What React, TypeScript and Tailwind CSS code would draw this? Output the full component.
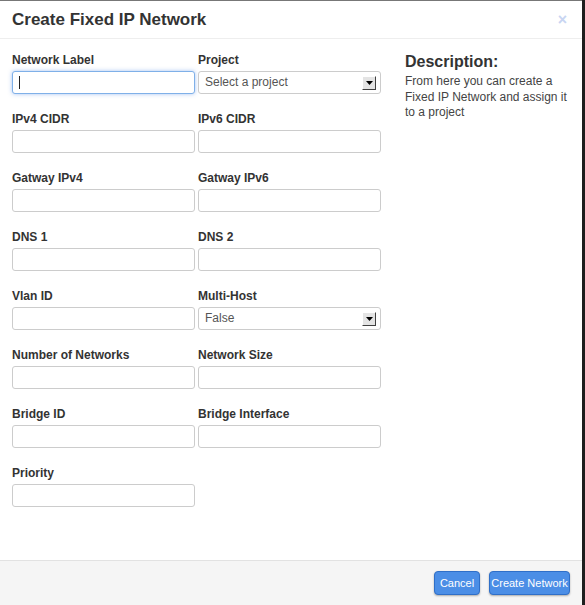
import React from "react";

const Arrow: React.FC = () => (
  <span className="absolute right-[4px] top-[4px] w-[14px] h-[14px] bg-[#e4e4e4] border border-t-white border-l-white border-r-[#404040] border-b-[#404040] flex items-center justify-center">
    <svg width="7" height="4" viewBox="0 0 7 4">
      <path d="M0 0h7L3.5 4z" fill="#000" />
    </svg>
  </span>
);

const Field: React.FC<{ label: string; value?: string; select?: boolean; focus?: boolean }> = ({
  label,
  value,
  select,
  focus,
}) => (
  <div className="w-[183px]">
    <div className="h-[14px] leading-[14px] text-[12px] font-bold text-[#333] mb-[4px]">{label}</div>
    <div
      className={
        "relative h-[23px] rounded-[3px] border bg-white text-[12px] text-[#555] leading-[21px] px-[6px] " +
        (focus
          ? "border-[#7fb0e8] shadow-[0_0_4px_rgba(82,140,230,0.5)]"
          : "border-[#cccccc]")
      }
    >
      {focus && <span className="inline-block w-px h-[13px] bg-[#222] align-middle" />}
      {value}
      {select && <Arrow />}
    </div>
  </div>
);

const rows: [string, string | null, string?, boolean?][] = [
  ["Network Label", "Project", "Select a project", true],
  ["IPv4 CIDR", "IPv6 CIDR"],
  ["Gatway IPv4", "Gatway IPv6"],
  ["DNS 1", "DNS 2"],
  ["Vlan ID", "Multi-Host", "False", true],
  ["Number of Networks", "Network Size"],
  ["Bridge ID", "Bridge Interface"],
  ["Priority", null],
];

const App: React.FC = () => {
  return (
    <div
      className="w-[585px] h-[605px] flex bg-white"
      style={{ fontFamily: '"Liberation Sans", Arial, sans-serif' }}
    >
      <div className="w-[582px] h-full flex flex-col border-t border-[#777]">
        {/* Header */}
        <div className="h-[38px] border-b border-[#eeeeee] flex items-center justify-between pl-[12px] pr-[15px]">
          <h1 className="text-[17px] font-bold text-[#333]">Create Fixed IP Network</h1>
          <span className="text-[16px] font-bold text-[#c8d5f2] leading-none">×</span>
        </div>

        {/* Body */}
        <div className="flex-1 flex pl-[12px] pt-[14px]">
          <div className="flex flex-col gap-[18px]">
            {rows.map(([a, b, v, sel], i) => (
              <div key={i} className="flex gap-[3px]">
                <Field label={a} focus={i === 0} />
                {b && <Field label={b} value={v} select={sel} />}
              </div>
            ))}
          </div>
          <div className="ml-[24px] w-[175px]">
            <h2 className="text-[16px] font-bold text-[#333] leading-[18px]">Description:</h2>
            <p className="mt-[3px] text-[12px] leading-[15.5px] text-[#444]">
              From here you can create a Fixed IP Network and assign it to a project
            </p>
          </div>
        </div>

        {/* Footer */}
        <div className="h-[45px] border-t border-[#e2e2e2] bg-[#f5f5f5] flex items-center justify-end gap-[9px] pr-[12px]">
          <button className="h-[24px] w-[46px] rounded-[4px] bg-[#4b8ee6] border border-[#2f6fc8] text-white text-[11px] shadow-[0_1px_2px_rgba(0,0,0,0.3)]">
            Cancel
          </button>
          <button className="h-[24px] w-[81px] rounded-[4px] bg-[#4b8ee6] border border-[#2f6fc8] text-white text-[11px] shadow-[0_1px_2px_rgba(0,0,0,0.3)]">
            Create Network
          </button>
        </div>
      </div>
      <div className="w-[3px] h-full bg-[#1e1e1e]" />
    </div>
  );
};

export default App;
